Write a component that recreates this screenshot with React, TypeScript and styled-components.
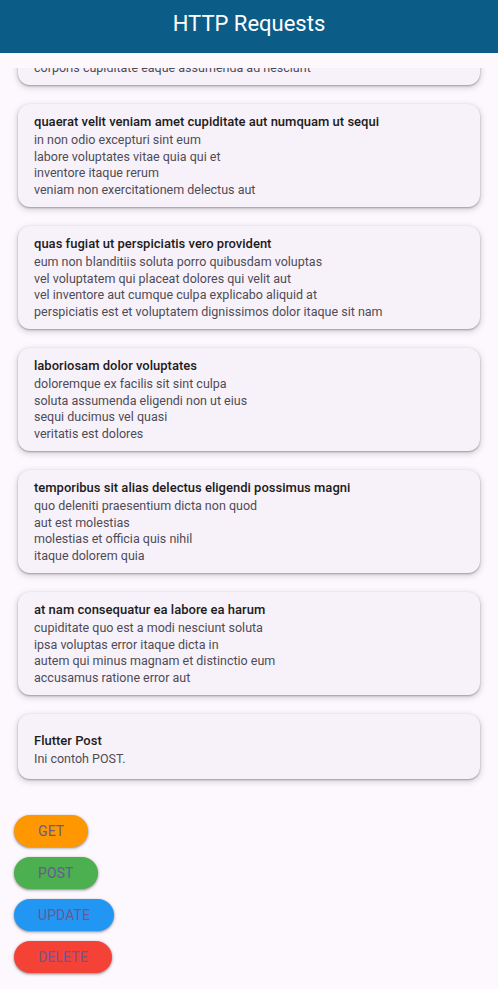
import React, { useLayoutEffect, useRef } from "react";
import styled, { createGlobalStyle } from "styled-components";

const GlobalStyle = createGlobalStyle`
  html, body {
    margin: 0;
    padding: 0;
    background: #fdf7fe;
    font-family: Roboto, "Noto Sans", Arial, sans-serif;
  }
  * { box-sizing: border-box; }
`;

type Post = { title: string; body: string };

const posts: Post[] = [
  {
    title: "qui qui voluptates illo iste minima",
    body: "aspernatur expedita soluta quo ab ut similique\nexpedita dolores amet\nsed temporibus distinctio magnam saepe deleniti\nomnis facilis nam ipsum natus sint similique omnis",
  },
  {
    title: "id minus libero illum nam ad officiis",
    body: "earum voluptatem facere provident blanditiis velit laboriosam\npariatur accusamus odio saepe\ncumque dolor qui a dicta ab doloribus consequatur omnis\ncorporis cupiditate eaque assumenda ad nesciunt",
  },
  {
    title: "quaerat velit veniam amet cupiditate aut numquam ut sequi",
    body: "in non odio excepturi sint eum\nlabore voluptates vitae quia qui et\ninventore itaque rerum\nveniam non exercitationem delectus aut",
  },
  {
    title: "quas fugiat ut perspiciatis vero provident",
    body: "eum non blanditiis soluta porro quibusdam voluptas\nvel voluptatem qui placeat dolores qui velit aut\nvel inventore aut cumque culpa explicabo aliquid at\nperspiciatis est et voluptatem dignissimos dolor itaque sit nam",
  },
  {
    title: "laboriosam dolor voluptates",
    body: "doloremque ex facilis sit sint culpa\nsoluta assumenda eligendi non ut eius\nsequi ducimus vel quasi\nveritatis est dolores",
  },
  {
    title: "temporibus sit alias delectus eligendi possimus magni",
    body: "quo deleniti praesentium dicta non quod\naut est molestias\nmolestias et officia quis nihil\nitaque dolorem quia",
  },
  {
    title: "at nam consequatur ea labore ea harum",
    body: "cupiditate quo est a modi nesciunt soluta\nipsa voluptas error itaque dicta in\nautem qui minus magnam et distinctio eum\naccusamus ratione error aut",
  },
];

const created: Post = { title: "Flutter Post", body: "Ini contoh POST." };

const Screen = styled.div`
  height: 989px;
  display: flex;
  flex-direction: column;
  background: #fdf7fe;
`;

const AppBar = styled.header`
  height: 53px;
  flex: 0 0 53px;
  background: #0c5c88;
  display: flex;
  align-items: center;
  justify-content: center;
  padding-bottom: 5px;
`;

const AppTitle = styled.h1`
  margin: 0;
  color: #ffffff;
  font-family: Roboto, sans-serif;
  font-weight: 400;
  font-size: 22px;
  line-height: 26px;
`;

const ListArea = styled.main`
  flex: 1 1 auto;
  min-height: 0;
  display: flex;
  flex-direction: column;
  padding-top: 15px;
`;

const ListViewport = styled.div`
  flex: 1 1 auto;
  min-height: 0;
  overflow-y: auto;
  scrollbar-width: none;
  &::-webkit-scrollbar { display: none; }
`;

const List = styled.div`
  display: flex;
  flex-direction: column;
  gap: 19.3px;
  padding: 10px 18px 10px;
`;

const Card = styled.div<{ $short?: boolean }>`
  background: #f7f2fa;
  border-radius: 12px;
  box-shadow: 0 1px 2px rgba(0, 0, 0, 0.3), 0 2px 6px 1px rgba(0, 0, 0, 0.15);
  padding: ${(p) => (p.$short ? "17.6px 16px 11px" : "8px 16px 8px")};
`;

const Title = styled.div`
  font-family: "Roboto Medium", Roboto, sans-serif;
  font-size: 13px;
  font-weight: 500;
  line-height: 20px;
  color: #1d1b20;
`;

const Body = styled.div`
  font-family: Roboto, sans-serif;
  font-size: 12.5px;
  font-weight: 400;
  line-height: 16.67px;
  color: #4f4b55;
  white-space: pre-line;
`;

const Actions = styled.div`
  flex: 0 0 auto;
  display: flex;
  flex-direction: column;
  align-items: flex-start;
  gap: 10px;
  padding: 26px 14px 16px;
`;

const ActionButton = styled.button<{ $bg: string }>`
  height: 32px;
  padding: 0 24px;
  border: none;
  border-radius: 16px;
  background: ${(p) => p.$bg};
  color: #6a5893;
  font-family: Roboto, sans-serif;
  font-size: 14px;
  font-weight: 400;
  letter-spacing: 0.1px;
  box-shadow: 0 1px 2px rgba(0, 0, 0, 0.3), 0 1px 3px 1px rgba(0, 0, 0, 0.15);
  cursor: pointer;
`;

const actions = [
  { label: "GET", color: "#ff9800" },
  { label: "POST", color: "#4caf50" },
  { label: "UPDATE", color: "#2196f3" },
  { label: "DELETE", color: "#f44336" },
];

export default function App() {
  const ref = useRef<HTMLDivElement>(null);
  useLayoutEffect(() => {
    if (ref.current) ref.current.scrollTop = ref.current.scrollHeight;
  }, []);
  return (
    <>
      <GlobalStyle />
      <Screen>
        <AppBar>
          <AppTitle>HTTP Requests</AppTitle>
        </AppBar>
        <ListArea>
          <ListViewport ref={ref}>
            <List>
              {posts.map((p) => (
                <Card key={p.title}>
                  <Title>{p.title}</Title>
                  <Body>{p.body}</Body>
                </Card>
              ))}
              <Card $short>
                <Title>{created.title}</Title>
                <Body>{created.body}</Body>
              </Card>
            </List>
          </ListViewport>
        </ListArea>
        <Actions>
          {actions.map((a) => (
            <ActionButton key={a.label} $bg={a.color}>
              {a.label}
            </ActionButton>
          ))}
        </Actions>
      </Screen>
    </>
  );
}
